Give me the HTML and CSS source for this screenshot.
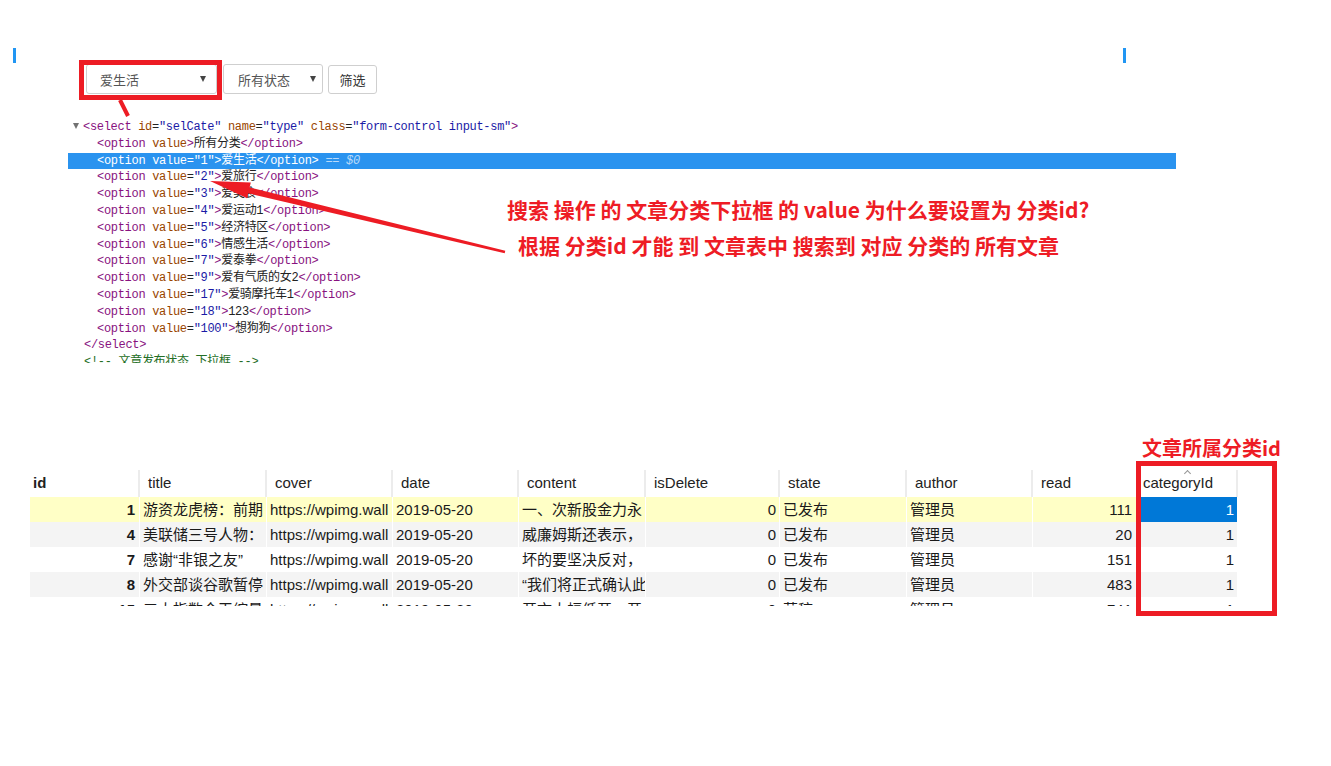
FILE: index.html
```html
<!DOCTYPE html>
<html lang="zh-CN">
<head>
<meta charset="utf-8">
<title>分类下拉框说明</title>
<link rel="stylesheet" href="styles.css">
</head>
<body>
<div class="page">
  <div class="marks"><i class="mark"></i><i class="mark"></i></div>

  <div class="filters">
    <div class="select sel-cate"><span>爱生活</span><i class="caret"></i></div>
    <div class="select sel-state"><span>所有状态</span><i class="caret"></i></div>
    <button class="btn">筛选</button>
  </div>

  <div class="devtools">
    <div class="ln lv0"><i class="tri"></i><span class="t">&lt;select</span> <span class="a">id</span>=<span class="v">"selCate"</span> <span class="a">name</span>=<span class="v">"type"</span> <span class="a">class</span>=<span class="v">"form-control input-sm"</span><span class="t">&gt;</span></div>
    <div class="ln lv1"><span class="t">&lt;option</span> <span class="a">value</span><span class="t">&gt;</span>所有分类<span class="t">&lt;/option&gt;</span></div>
    <div class="ln lv1 sel"><span class="t">&lt;option</span> <span class="a">value</span>=<span class="v">"1"</span><span class="t">&gt;</span>爱生活<span class="t">&lt;/option&gt;</span><span class="eq"> == <em>$0</em></span></div>
    <div class="ln lv1"><span class="t">&lt;option</span> <span class="a">value</span>=<span class="v">"2"</span><span class="t">&gt;</span>爱旅行<span class="t">&lt;/option&gt;</span></div>
    <div class="ln lv1"><span class="t">&lt;option</span> <span class="a">value</span>=<span class="v">"3"</span><span class="t">&gt;</span>爱美食<span class="t">&lt;/option&gt;</span></div>
    <div class="ln lv1"><span class="t">&lt;option</span> <span class="a">value</span>=<span class="v">"4"</span><span class="t">&gt;</span>爱运动1<span class="t">&lt;/option&gt;</span></div>
    <div class="ln lv1"><span class="t">&lt;option</span> <span class="a">value</span>=<span class="v">"5"</span><span class="t">&gt;</span>经济特区<span class="t">&lt;/option&gt;</span></div>
    <div class="ln lv1"><span class="t">&lt;option</span> <span class="a">value</span>=<span class="v">"6"</span><span class="t">&gt;</span>情感生活<span class="t">&lt;/option&gt;</span></div>
    <div class="ln lv1"><span class="t">&lt;option</span> <span class="a">value</span>=<span class="v">"7"</span><span class="t">&gt;</span>爱泰拳<span class="t">&lt;/option&gt;</span></div>
    <div class="ln lv1"><span class="t">&lt;option</span> <span class="a">value</span>=<span class="v">"9"</span><span class="t">&gt;</span>爱有气质的女2<span class="t">&lt;/option&gt;</span></div>
    <div class="ln lv1"><span class="t">&lt;option</span> <span class="a">value</span>=<span class="v">"17"</span><span class="t">&gt;</span>爱骑摩托车1<span class="t">&lt;/option&gt;</span></div>
    <div class="ln lv1"><span class="t">&lt;option</span> <span class="a">value</span>=<span class="v">"18"</span><span class="t">&gt;</span>123<span class="t">&lt;/option&gt;</span></div>
    <div class="ln lv1"><span class="t">&lt;option</span> <span class="a">value</span>=<span class="v">"100"</span><span class="t">&gt;</span>想狗狗<span class="t">&lt;/option&gt;</span></div>
    <div class="ln lv0b"><span class="t">&lt;/select&gt;</span></div>
    <div class="ln lv0b"><span class="c">&lt;!-- 文章发布状态 下拉框 --&gt;</span></div>
  </div>

  <div class="grid">
    <div class="trow thead">
      <div class="th th-id">id</div>
      <div class="th">title</div>
      <div class="th">cover</div>
      <div class="th">date</div>
      <div class="th">content</div>
      <div class="th">isDelete</div>
      <div class="th">state</div>
      <div class="th">author</div>
      <div class="th">read</div>
      <div class="th th-cat">categoryId<i class="sort"></i></div>
    </div>
    <div class="trow r-yellow">
      <div class="td id">1</div><div class="td">游资龙虎榜：前期</div><div class="td">https://wpimg.wall</div><div class="td">2019-05-20</div><div class="td">一、次新股金力永</div><div class="td num">0</div><div class="td">已发布</div><div class="td">管理员</div><div class="td num rd">111</div><div class="td num cur">1</div>
    </div>
    <div class="trow r-gray">
      <div class="td id">4</div><div class="td">美联储三号人物：</div><div class="td">https://wpimg.wall</div><div class="td">2019-05-20</div><div class="td">威廉姆斯还表示，</div><div class="td num">0</div><div class="td">已发布</div><div class="td">管理员</div><div class="td num rd">20</div><div class="td num">1</div>
    </div>
    <div class="trow">
      <div class="td id">7</div><div class="td">感谢“非银之友”</div><div class="td">https://wpimg.wall</div><div class="td">2019-05-20</div><div class="td">坏的要坚决反对，</div><div class="td num">0</div><div class="td">已发布</div><div class="td">管理员</div><div class="td num rd">151</div><div class="td num">1</div>
    </div>
    <div class="trow r-gray">
      <div class="td id">8</div><div class="td">外交部谈谷歌暂停</div><div class="td">https://wpimg.wall</div><div class="td">2019-05-20</div><div class="td">“我们将正式确认此</div><div class="td num">0</div><div class="td">已发布</div><div class="td">管理员</div><div class="td num rd">483</div><div class="td num">1</div>
    </div>
    <div class="trow">
      <div class="td id">15</div><div class="td">三大指数今天缩量</div><div class="td">https://wpimg.wall</div><div class="td">2019-05-20</div><div class="td">开市大幅低开，开</div><div class="td num">0</div><div class="td">草稿</div><div class="td">管理员</div><div class="td num rd">741</div><div class="td num">1</div>
    </div>
  </div>

  <div class="box box-select"></div>
  <div class="box box-cat"></div>
  <div class="note note-cat">文章所属分类id</div>
  <div class="note note-main">
    <p class="q">搜索 操作 的 文章分类下拉框 的 value 为什么要设置为 分类id?</p>
    <p class="a2">根据 分类id 才能 到 文章表中 搜索到 对应 分类的 所有文章</p>
  </div>
  <svg class="arrows" width="1331" height="766" viewBox="0 0 1331 766">
    <line x1="120" y1="100" x2="128" y2="116" stroke="#ed1c24" stroke-width="4"/>
    <polygon fill="#ed1c24" points="505.3,250.8 249.6,187.5 250.8,182.6 210,181 247.0,198.2 248.2,193.3 504.7,253.2"/>
  </svg>
</div>
</body>
</html>
```

FILE: styles.css
```css
* { box-sizing: border-box; }

html, body {
  margin: 0;
  padding: 0;
  background: #fff;
}

body {
  font-family: "Liberation Sans", "Noto Sans CJK SC", sans-serif;
  color: #1a1a1a;
}

.page {
  position: relative;
  width: 1331px;
  height: 766px;
  overflow: hidden;
}

/* blue edge marks */
.marks {
  display: flex;
  justify-content: space-between;
  width: 1113px;
  margin: 48px 0 0 13px;
}
.mark {
  display: block;
  width: 3px;
  height: 15px;
  background: #2196f3;
}

/* filter row */
.filters {
  display: flex;
  align-items: center;
  margin: 1px 0 0 86px;
  height: 30px;
}
.select {
  display: flex;
  align-items: center;
  justify-content: space-between;
  height: 30px;
  border: 1px solid #cfcfcf;
  border-radius: 3px;
  background: #fff;
  font-family: "Noto Sans CJK SC", sans-serif;
  font-size: 13px;
  color: #555;
}
.sel-cate {
  width: 131px;
  padding: 0 10px 0 13px;
}
.sel-state {
  width: 100px;
  margin-left: 6px;
  padding: 0 6px 0 14px;
}
.caret {
  display: block;
  width: 0;
  height: 0;
  border-left: 3px solid transparent;
  border-right: 3px solid transparent;
  border-top: 6px solid #444;
}
.btn {
  margin-left: 5px;
  width: 49px;
  height: 29px;
  border: 1px solid #cfcfcf;
  border-radius: 3px;
  background: #fff;
  font-family: "Noto Sans CJK SC", sans-serif;
  font-size: 13px;
  color: #333;
  padding: 0;
}

/* devtools elements panel */
.devtools {
  margin: 25px 0 0 68px;
  width: 1108px;
  height: 244px;
  overflow: hidden;
  font-family: "Liberation Mono", "Noto Sans CJK SC", monospace;
  font-size: 12px;
  letter-spacing: -0.3px;
  line-height: 16.8px;
  color: #222;
}
.ln {
  height: 16.8px;
  white-space: nowrap;
}
.lv0 { padding-left: 5px; }
.lv0b { padding-left: 16px; }
.lv1 { padding-left: 29px; }
.tri {
  display: inline-block;
  width: 0;
  height: 0;
  border-left: 3.5px solid transparent;
  border-right: 3.5px solid transparent;
  border-top: 6px solid #727272;
  margin-right: 4px;
  vertical-align: 1px;
}
.t { color: #881280; }
.a { color: #994500; }
.v { color: #1a1aa6; }
.c { color: #236e25; }
.sel {
  background: #2a93ef;
  color: #fff;
}
.sel .t, .sel .a, .sel .v { color: #fff; }
.sel .eq { color: #b9dafa; }
.sel em { font-style: italic; }

/* data grid */
.grid {
  margin: 107px 0 0 30px;
  width: 1208px;
  height: 136px;
  overflow: hidden;
  font-size: 15px;
}
.trow {
  display: grid;
  grid-template-columns: 110px 127px 126px 126px 127px 134px 127px 126px 106px 99px;
  height: 25px;
}
.thead {
  height: 27px;
  background: #fff;
}
.th {
  position: relative;
  line-height: 26px;
  padding-left: 8px;
  border-right: 2px solid #ececec;
  color: #222;
  white-space: nowrap;
}
.th-id {
  padding-left: 3px;
  font-weight: bold;
}
.th-cat { padding-left: 4px; }
.sort {
  position: absolute;
  top: 1px;
  left: 46px;
  width: 5px;
  height: 5px;
  border-left: 1px solid #999;
  border-top: 1px solid #999;
  transform: rotate(45deg);
}
.td {
  line-height: 25px;
  padding: 0 3px;
  border-right: 1px solid #fff;
  white-space: nowrap;
  overflow: hidden;
  text-overflow: clip;
}
.td.id {
  text-align: right;
  font-weight: bold;
  padding-right: 4px;
}
.td.num { text-align: right; }
.td.rd { padding-right: 6px; }
.r-yellow { background: #ffffc6; }
.r-gray { background: #f4f4f4; }
.td.cur {
  background: #0078d7;
  color: #fff;
}

/* annotations */
.box {
  position: absolute;
  border: 5px solid #ed1c24;
}
.box-select {
  left: 79px;
  top: 60px;
  width: 143px;
  height: 40px;
}
.box-cat {
  left: 1136px;
  top: 461px;
  width: 141px;
  height: 155px;
}
.note {
  position: absolute;
  font-family: "Noto Sans CJK SC", sans-serif;
  font-weight: 700;
  color: #ee1c25;
  white-space: nowrap;
}
.note-cat {
  left: 1142px;
  top: 436px;
  font-size: 20px;
  line-height: 24px;
}
.note-main {
  left: 507px;
  top: 191px;
  font-size: 21px;
  line-height: 36px;
}
.note-main p { margin: 0; }
.note-main .a2 { padding-left: 11px; }
.arrows {
  position: absolute;
  left: 0;
  top: 0;
  pointer-events: none;
}
```
